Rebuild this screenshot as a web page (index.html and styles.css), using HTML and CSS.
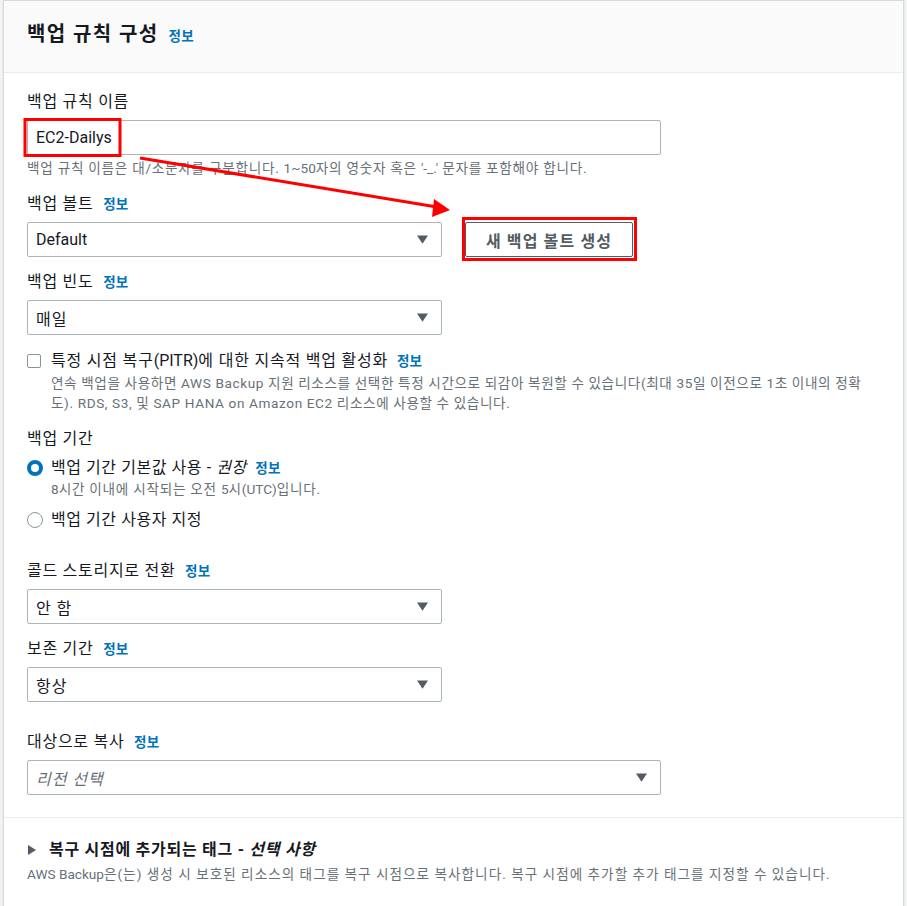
FILE: index.html
```html
<!DOCTYPE html>
<html lang="ko">
<head>
<meta charset="utf-8">
<title>백업 규칙 구성</title>
<link rel="stylesheet" href="styles.css">
</head>
<body>
<div class="panel">
  <div class="panel-header">
    <h2 class="panel-title">백업 규칙 구성</h2>
    <a class="info info-head">정보</a>
  </div>
  <div class="panel-body">
    <div class="field first">
      <div class="label">백업 규칙 이름</div>
      <div class="control wide"><span class="value en">EC2-Dailys</span></div>
      <div class="hint">백업 규칙 이름은 대/소문자를 구분합니다. <span class="en">1~50</span>자의 영숫자 혹은 <span class="en">'-_.'</span> 문자를 포함해야 합니다.</div>
    </div>

    <div class="field f-vault">
      <div class="label">백업 볼트 <a class="info">정보</a></div>
      <div class="row">
        <div class="control select narrow"><span class="value en">Default</span><svg class="caret" viewBox="0 0 12 9"><polygon points="0,0 12,0 6,9"/></svg></div>
        <button class="btn">새 백업 볼트 생성</button>
      </div>
    </div>

    <div class="field f-freq">
      <div class="label">백업 빈도 <a class="info">정보</a></div>
      <div class="control select narrow"><span class="value">매일</span><svg class="caret" viewBox="0 0 12 9"><polygon points="0,0 12,0 6,9"/></svg></div>
    </div>

    <div class="check-row">
      <span class="checkbox"></span>
      <span class="check-label">특정 시점 복구<span class="en">(PITR)</span>에 대한 지속적 백업 활성화 <a class="info">정보</a></span>
    </div>
    <div class="check-desc">연속 백업을 사용하면 AWS Backup 지원 리소스를 선택한 특정 시간으로 되감아 복원할 수 있습니다(최대 35일 이전으로 1초 이내의 정확도). RDS, S3, 및 SAP HANA on Amazon EC2 리소스에 사용할 수 있습니다.</div>

    <div class="label f-window">백업 기간</div>
    <div class="radio-row r1">
      <span class="radio checked"></span>
      <span class="radio-label">백업 기간 기본값 사용 - <em>권장</em> <a class="info">정보</a></span>
    </div>
    <div class="radio-desc"><span class="en">8</span>시간 이내에 시작되는 오전 <span class="en">5</span>시<span class="en">(UTC)</span>입니다.</div>
    <div class="radio-row r2">
      <span class="radio"></span>
      <span class="radio-label">백업 기간 사용자 지정</span>
    </div>

    <div class="field f-cold">
      <div class="label">콜드 스토리지로 전환 <a class="info">정보</a></div>
      <div class="control select narrow"><span class="value">안 함</span><svg class="caret" viewBox="0 0 12 9"><polygon points="0,0 12,0 6,9"/></svg></div>
    </div>

    <div class="field f-ret">
      <div class="label">보존 기간 <a class="info">정보</a></div>
      <div class="control select narrow"><span class="value">항상</span><svg class="caret" viewBox="0 0 12 9"><polygon points="0,0 12,0 6,9"/></svg></div>
    </div>

    <div class="field f-copy">
      <div class="label">대상으로 복사 <a class="info">정보</a></div>
      <div class="control select wide"><span class="value placeholder">리전 선택</span><svg class="caret" viewBox="0 0 12 9"><polygon points="0,0 12,0 6,9"/></svg></div>
    </div>
  </div>

  <div class="expand">
    <div class="expand-head">
      <svg class="expand-caret" viewBox="0 0 8 10"><polygon points="0,0 8,5 0,10"/></svg>
      <span>복구 시점에 추가되는 태그 - <em>선택 사항</em></span>
    </div>
    <div class="expand-desc"><span class="en">AWS Backup</span>은(는) 생성 시 보호된 리소스의 태그를 복구 시점으로 복사합니다. 복구 시점에 추가할 추가 태그를 지정할 수 있습니다.</div>
  </div>
</div>

<svg class="annot" width="907" height="906" viewBox="0 0 907 906">
  <rect x="25" y="119.5" width="95" height="36" fill="none" stroke="#ff0000" stroke-width="3"/>
  <rect x="463.5" y="218.5" width="172" height="41" fill="none" stroke="#ff0000" stroke-width="3"/>
  <line x1="140" y1="158" x2="437" y2="207" stroke="#ff0000" stroke-width="3"/>
  <polygon points="450,210 434,199 432,217" fill="#ff0000"/>
</svg>
</body>
</html>
```
FILE: styles.css
```css
* { box-sizing: border-box; }

html, body {
  margin: 0;
  padding: 0;
}

body {
  position: relative;
  background: #f2f3f3;
  font-family: Roboto, "Noto Sans CJK KR", sans-serif;
  color: #16191f;
  font-size: 16px;
  height: 906px;
  overflow: hidden;
}

.panel {
  margin-left: 3px;
  width: 901px;
  background: #ffffff;
  border: 1px solid #d5dbdb;
  border-bottom: none;
  box-shadow: 0 1px 1px 0 rgba(0, 28, 36, 0.2);
}

.panel-header {
  height: 72px;
  background: #fafafa;
  border-bottom: 1px solid #eaeded;
  display: flex;
  align-items: center;
  padding: 0 23px 6px 23px;
}

.panel-title {
  margin: 0;
  font-size: 20px;
  font-weight: 700;
  line-height: 26px;
  color: #16191f;
  letter-spacing: 0.07em;
}

.info {
  color: #0073bb;
  font-weight: 700;
  font-size: 13.5px;
  text-decoration: none;
  margin-left: 5px;
  letter-spacing: 0.02em;
  font-style: normal;
}

.info-head {
  margin-left: 10px;
  margin-top: 3px;
}

.panel-body {
  padding: 17px 23px 22px 23px;
}

.label {
  line-height: 22px;
  font-size: 16px;
  color: #16191f;
  letter-spacing: 0.045em;
}

.field .label {
  padding-top: 1px;
  margin-bottom: 7px;
}

.f-vault { margin-top: 15px; }
.f-freq { margin-top: 13px; }
.f-cold { margin-top: 28px; }
.f-ret { margin-top: 13px; }
.f-copy { margin-top: 28px; }

.control {
  height: 35px;
  border: 1px solid #aab7b8;
  border-radius: 2px;
  background: #ffffff;
  display: flex;
  align-items: center;
  padding: 0 13px 0 8px;
}

.control.wide { width: 634px; }
.control.narrow { width: 415px; }

.value {
  font-size: 16px;
  color: #16191f;
  flex: 1;
  letter-spacing: 0.06em;
}

.value.placeholder {
  color: #687078;
  font-style: italic;
}

.en { letter-spacing: 0; }

.caret {
  width: 11px;
  height: 9px;
  fill: #545b64;
}

.hint {
  margin-top: 4px;
  font-size: 13.6px;
  line-height: 18px;
  color: #687078;
  letter-spacing: 0.055em;
}

.row {
  display: flex;
  align-items: center;
  gap: 23px;
}

.btn {
  height: 35px;
  width: 168px;
  border: 1px solid #545b64;
  border-radius: 2px;
  background: #ffffff;
  color: #545b64;
  font-family: Roboto, "Noto Sans CJK KR", sans-serif;
  font-size: 16px;
  font-weight: 700;
  letter-spacing: 0.07em;
  padding: 0;
}

.check-row {
  margin-top: 15px;
  display: flex;
  align-items: center;
  line-height: 22px;
}

.checkbox {
  width: 14px;
  height: 14px;
  border: 1.5px solid #879596;
  border-radius: 2px;
  margin-right: 10px;
  flex: none;
}

.check-label {
  font-size: 16px;
  letter-spacing: 0.05em;
}

.radio-label {
  font-size: 16px;
  letter-spacing: 0.035em;
}

.check-label .info, .radio-label .info {
  margin-left: 4px;
}

.check-desc {
  margin-left: 24px;
  margin-top: 1px;
  font-size: 13.6px;
  line-height: 20px;
  color: #687078;
  letter-spacing: 0.045em;
}

.f-window {
  margin-top: 15px;
}

.radio-row {
  display: flex;
  align-items: center;
  line-height: 22px;
}

.radio-row.r1 { margin-top: 7px; }
.radio-row.r2 { margin-top: 10px; }

.radio {
  width: 16px;
  height: 16px;
  border-radius: 50%;
  border: 1.5px solid #879596;
  margin-right: 8px;
  flex: none;
  background: #ffffff;
}

.radio.checked {
  border: 4.5px solid #0073bb;
}

.radio-desc {
  margin-left: 24px;
  margin-top: 1px;
  font-size: 13.6px;
  line-height: 19px;
  color: #687078;
  letter-spacing: 0.055em;
}

.expand {
  border-top: 1px solid #eaeded;
  padding: 21px 23px 24px 23px;
}

.expand-head {
  display: flex;
  align-items: center;
  line-height: 22px;
  font-size: 16px;
  font-weight: 700;
  color: #16191f;
  letter-spacing: 0.045em;
}

.expand-caret {
  width: 8px;
  height: 10px;
  fill: #545b64;
  margin-right: 13px;
  margin-left: 1px;
}

.expand-desc {
  margin-top: 4px;
  font-size: 13.6px;
  line-height: 19px;
  color: #687078;
  letter-spacing: 0.075em;
}

.annot {
  position: absolute;
  top: 0;
  left: 0;
  pointer-events: none;
}
```
